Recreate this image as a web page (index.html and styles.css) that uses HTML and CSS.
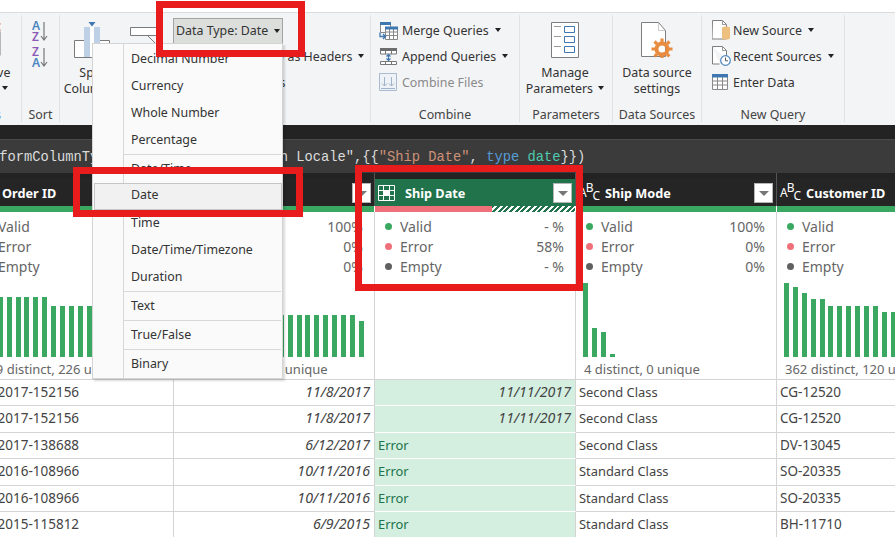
FILE: index.html
```html
<!DOCTYPE html>
<html>
<head>
    <title>Power Query Editor</title>
    <link rel="stylesheet" href="styles.css">
</head>
<body>
<div class="app">
    <div class="top-strip"></div>

    <div class="ribbon">
        <div class="group group-reduce">
            <div class="group-body big-btn">
                <svg class="big-icon" width="30" height="36" viewBox="0 0 30 36">
                    <path d="M1 9.500h27v24H1z M1 17.500h27 M1 25.500h27 M15 9.500v24" fill="#fff" stroke="#7a7a7a"/>
                    <path d="M19 1l9 8M28 1l-9 8" stroke="#d9673c" stroke-width="2.500" fill="none"/>
                </svg>
                <div class="big-label">Remove<br>Rows <span class="caret"></span></div>
            </div>
            <div class="group-label">Reduce Rows</div>
        </div>

        <div class="group group-sort">
            <div class="group-body sort-icons">
                <div class="sort-icon">
                    <div class="sort-letters"><span class="az-blue">A</span><span class="az-purple">Z</span></div>
                    <svg width="8" height="22" viewBox="0 0 8 22"><path d="M4 2v18M1 16l3 4 3-4" fill="none" stroke="#777" stroke-width="1.200"/></svg>
                </div>
                <div class="sort-icon">
                    <div class="sort-letters"><span class="az-purple">Z</span><span class="az-blue">A</span></div>
                    <svg width="8" height="22" viewBox="0 0 8 22"><path d="M4 2v18M1 16l3 4 3-4" fill="none" stroke="#777" stroke-width="1.200"/></svg>
                </div>
            </div>
            <div class="group-label">Sort</div>
        </div>

        <div class="group group-transform">
            <div class="group-body transform-body">
                <div class="big-btn split-btn">
                    <svg class="big-icon" width="36" height="36" viewBox="0 0 36 36">
                        <path d="M0.500 18.500h35v17h-35z" fill="#fff" stroke="#7a7a7a"/>
                        <path d="M10 5h6v30h-6zM20 5h6v30h-6z" fill="#bdd0e6"/>
                        <path d="M16 5h4v30h-4z" fill="#fff"/>
                        <path d="M14.500 0h7L18 4.500z" fill="#3f78b0"/>
                    </svg>
                    <div class="big-label">Split<br>Column <span class="caret"></span></div>
                </div>
                <div class="group-by">
                    <svg width="30" height="30" viewBox="0 0 30 30">
                        <path d="M0.500 0.500h29v8h-29z" fill="#fff" stroke="#7a7a7a"/>
                        <path d="M18 9l8 8" stroke="#7a7a7a"/>
                    </svg>
                </div>
                <div class="list-col list-transform">
                    <div class="list-row"><div class="data-type">Data Type: Date <span class="caret"></span></div></div>
                    <div class="list-row first-row">Use First Row as Headers <span class="caret"></span></div>
                    <div class="list-row replace-row">Replace Values</div>
                </div>
            </div>
            <div class="group-label">Transform</div>
        </div>

        <div class="group group-combine">
            <div class="group-body list-col">
                <div class="list-row">
                    <svg class="row-icon" width="19" height="19" viewBox="0 0 19 19">
                        <path d="M1.500 1.500h10v10h-10z" fill="#fff" stroke="#888"/>
                        <path d="M1 1h11v3H1z" fill="#3f78b0"/>
                        <path d="M6.500 6.500h12v12h-12z M6.500 11h12 M6.500 14.500h12 M10.500 6.500v12 M14.500 6.500v12" fill="#fff" stroke="#888"/>
                        <path d="M6 5.500h13v3H6z" fill="#3f78b0"/>
                        <path d="M1 11.500v4h5M4 13l2.500 2.500L4 18" fill="none" stroke="#3f78b0" stroke-width="1.300"/>
                    </svg>
                    <span>Merge Queries</span> <span class="caret"></span>
                </div>
                <div class="list-row">
                    <svg class="row-icon" width="19" height="19" viewBox="0 0 19 19">
                        <path d="M1 1h17v3H1z" fill="#6d6d6d"/>
                        <path d="M1.500 4v3h16V4M6.500 4v3M12.500 4v3M1.500 14.500h16v3h-16zM6.500 14.500v3M12.500 14.500v3" fill="#fff" stroke="#777"/>
                        <path d="M9.500 7.500v6M7.500 9.500l2-2 2 2M7.500 11.500l2 2 2-2" fill="none" stroke="#3f78b0" stroke-width="1.200"/>
                    </svg>
                    <span>Append Queries</span> <span class="caret"></span>
                </div>
                <div class="list-row row-disabled">
                    <svg class="row-icon" width="19" height="19" viewBox="0 0 19 19">
                        <path d="M0.500 0.500h17v17h-17z" fill="#eef1f5" stroke="#a9bbd0"/>
                        <path d="M5.500 4v9M3 10.500l2.500 2.500 2.500-2.500M12.500 4v9M10 10.500l2.500 2.500 2.500-2.500M2 15.500h14" fill="none" stroke="#9fb3ca"/>
                    </svg>
                    <span>Combine Files</span>
                </div>
            </div>
            <div class="group-label">Combine</div>
        </div>

        <div class="group group-params">
            <div class="group-body big-btn">
                <svg class="big-icon" width="28" height="36" viewBox="0 0 28 36">
                    <path d="M0.500 0.500h27v35h-27z" fill="#fff" stroke="#7e7e7e"/>
                    <path d="M3 4.500h7M3 14.500h7M3 24.500h7" stroke="#9a9a9a"/>
                    <path d="M13.500 4.500h10v6h-10zM13.500 14.500h10v6h-10zM13.500 24.500h10v6h-10z" fill="#fff" stroke="#3f78b0"/>
                </svg>
                <div class="big-label">Manage<br>Parameters <span class="caret"></span></div>
            </div>
            <div class="group-label">Parameters</div>
        </div>

        <div class="group group-sources">
            <div class="group-body big-btn">
                <svg class="big-icon" width="32" height="36" viewBox="0 0 32 36">
                    <path d="M0.500 0.500h17l7 8v26h-24z" fill="#fff" stroke="#7e7e7e"/>
                    <path d="M17.500 0.500v8h7" fill="none" stroke="#9a9a9a" stroke-dasharray="1 1"/>
                    <circle cx="21" cy="27" r="5.500" fill="none" stroke="#e88c3f" stroke-width="4"/>
                    <path d="M21 16.500v21M10.500 27h21M13.500 19.500l15 15M28.500 19.500l-15 15" stroke="#e88c3f" stroke-width="3.200" stroke-dasharray="3.500 14 3.500"/>
                </svg>
                <div class="big-label">Data source<br>settings</div>
            </div>
            <div class="group-label">Data Sources</div>
        </div>

        <div class="group group-query">
            <div class="group-body list-col">
                <div class="list-row">
                    <svg class="row-icon" width="19" height="20" viewBox="0 0 19 20">
                        <path d="M0.500 0.500h10l4 4v14.500h-14.500z" fill="#fff" stroke="#7e7e7e"/>
                        <path d="M10.500 0.500v4h4" fill="none" stroke="#999"/>
                        <path d="M10 8c0-2 8-2 8 0v10c0 2-8 2-8 0z" fill="#edc07f"/>
                    </svg>
                    <span>New Source</span> <span class="caret"></span>
                </div>
                <div class="list-row">
                    <svg class="row-icon" width="19" height="20" viewBox="0 0 19 20">
                        <path d="M0.500 0.500h10l4 4v9M0.500 0.500v17.500h7" fill="#fff" stroke="#7e7e7e"/>
                        <path d="M10.500 0.500v4h4" fill="none" stroke="#999"/>
                        <circle cx="13.500" cy="14.500" r="4.800" fill="#fff" stroke="#4a86c0" stroke-width="1.200"/>
                        <path d="M13.500 11.500v3.300h2.500" fill="none" stroke="#555"/>
                    </svg>
                    <span>Recent Sources</span> <span class="caret"></span>
                </div>
                <div class="list-row">
                    <svg class="row-icon" width="19" height="17" viewBox="0 0 19 17">
                        <path d="M0.500 0.500h15v15h-15zM0.500 7h15M0.500 11h15M5.500 3v12.500M10.500 3v12.500" fill="#fff" stroke="#888"/>
                        <path d="M0 0h16v3.500H0z" fill="#3f78b0"/>
                    </svg>
                    <span>Enter Data</span>
                </div>
            </div>
            <div class="group-label">New Query</div>
        </div>
    </div>

    <div class="dark-gap"></div>
    <div class="formula">
        <div class="formula-text">= Table.TransformColumnTypes(#"Changed Type with Locale",{{<span class="f-str">"Ship Date"</span>, <span class="f-kw">type</span> <span class="f-type">date</span>}})</div>
    </div>

    <div class="grid">
        <div class="head">
            <span class="abc">A<sup>B</sup><sub>C</sub></span>
            <span class="head-name">Order ID</span>
            <span class="filter"></span>
        </div>
        <div class="head">
            <span class="head-name">Order Date</span>
            <span class="filter"></span>
        </div>
        <div class="head head-selected">
            <svg class="cal" width="18" height="16" viewBox="0 0 18 16">
                <path d="M0.500 0.500h16v15h-16zM0.500 5.500h16M0.500 10.500h16M5.500 0.500v15M11.500 0.500v15" fill="none" stroke="#fff"/>
                <path d="M6 6h5v4H6z" fill="#fff"/>
            </svg>
            <span class="head-name">Ship Date</span>
            <span class="filter"></span>
        </div>
        <div class="head">
            <span class="abc">A<sup>B</sup><sub>C</sub></span>
            <span class="head-name">Ship Mode</span>
            <span class="filter"></span>
        </div>
        <div class="head">
            <span class="abc">A<sup>B</sup><sub>C</sub></span>
            <span class="head-name">Customer ID</span>
            <span class="filter"></span>
        </div>

        <div class="quality"></div>
        <div class="quality"></div>
        <div class="quality quality-error"><div class="q-red"></div><div class="q-hatch"></div></div>
        <div class="quality"></div>
        <div class="quality"></div>

        <div class="profile">
            <div class="stats">
                <div class="stat"><i class="dot dot-valid"></i>Valid<b>100%</b></div>
                <div class="stat"><i class="dot dot-error"></i>Error<b>0%</b></div>
                <div class="stat"><i class="dot dot-empty"></i>Empty<b>0%</b></div>
            </div>
            <div class="bars">
                <i style="height:60px"></i><i style="height:60px"></i><i style="height:60px"></i><i style="height:60px"></i><i style="height:60px"></i><i style="height:60px"></i><i style="height:60px"></i><i style="height:60px"></i>
                <i style="height:51px"></i><i style="height:51px"></i><i style="height:51px"></i><i style="height:51px"></i><i style="height:51px"></i><i style="height:51px"></i><i style="height:51px"></i><i style="height:51px"></i>
            </div>
            <div class="distinct">229 distinct, 226 unique</div>
        </div>
        <div class="profile">
            <div class="stats">
                <div class="stat"><i class="dot dot-valid"></i>Valid<b>100%</b></div>
                <div class="stat"><i class="dot dot-error"></i>Error<b>0%</b></div>
                <div class="stat"><i class="dot dot-empty"></i>Empty<b>0%</b></div>
            </div>
            <div class="bars">
                <i style="height:60px"></i><i style="height:60px"></i><i style="height:51px"></i><i style="height:51px"></i><i style="height:51px"></i><i style="height:51px"></i><i style="height:51px"></i><i style="height:51px"></i><i style="height:51px"></i><i style="height:51px"></i><i style="height:42px"></i><i style="height:42px"></i><i style="height:42px"></i><i style="height:42px"></i><i style="height:42px"></i><i style="height:42px"></i><i style="height:42px"></i><i style="height:42px"></i><i style="height:42px"></i><i style="height:42px"></i><i style="height:36px"></i>
            </div>
            <div class="distinct">228 distinct, 226 unique</div>
        </div>
        <div class="profile">
            <div class="stats">
                <div class="stat"><i class="dot dot-valid"></i>Valid<b>- %</b></div>
                <div class="stat"><i class="dot dot-error"></i>Error<b>58%</b></div>
                <div class="stat"><i class="dot dot-empty"></i>Empty<b>- %</b></div>
            </div>
        </div>
        <div class="profile">
            <div class="stats">
                <div class="stat"><i class="dot dot-valid"></i>Valid<b>100%</b></div>
                <div class="stat"><i class="dot dot-error"></i>Error<b>0%</b></div>
                <div class="stat"><i class="dot dot-empty"></i>Empty<b>0%</b></div>
            </div>
            <div class="bars">
                <i style="height:74px"></i><i style="height:29px"></i><i style="height:25px"></i><i style="height:3px"></i>
            </div>
            <div class="distinct">4 distinct, 0 unique</div>
        </div>
        <div class="profile">
            <div class="stats">
                <div class="stat"><i class="dot dot-valid"></i>Valid<b>100%</b></div>
                <div class="stat"><i class="dot dot-error"></i>Error<b>0%</b></div>
                <div class="stat"><i class="dot dot-empty"></i>Empty<b>0%</b></div>
            </div>
            <div class="bars">
                <i style="height:74px"></i><i style="height:70px"></i><i style="height:64px"></i><i style="height:58px"></i><i style="height:58px"></i><i style="height:51px"></i><i style="height:51px"></i><i style="height:51px"></i><i style="height:51px"></i><i style="height:51px"></i><i style="height:51px"></i><i style="height:45px"></i><i style="height:45px"></i>
            </div>
            <div class="distinct">362 distinct, 120 unique</div>
        </div>

        <div class="cell cell-id">CA-2017-152156</div><div class="cell cell-date">11/8/2017</div><div class="cell cell-sel cell-date">11/11/2017</div><div class="cell">Second Class</div><div class="cell cell-id">CG-12520</div>
        <div class="cell cell-id">CA-2017-152156</div><div class="cell cell-date">11/8/2017</div><div class="cell cell-sel cell-date">11/11/2017</div><div class="cell">Second Class</div><div class="cell cell-id">CG-12520</div>
        <div class="cell cell-id">CA-2017-138688</div><div class="cell cell-date">6/12/2017</div><div class="cell cell-sel cell-err">Error</div><div class="cell">Second Class</div><div class="cell cell-id">DV-13045</div>
        <div class="cell cell-id">US-2016-108966</div><div class="cell cell-date">10/11/2016</div><div class="cell cell-sel cell-err">Error</div><div class="cell">Standard Class</div><div class="cell cell-id">SO-20335</div>
        <div class="cell cell-id">US-2016-108966</div><div class="cell cell-date">10/11/2016</div><div class="cell cell-sel cell-err">Error</div><div class="cell">Standard Class</div><div class="cell cell-id">SO-20335</div>
        <div class="cell cell-id">CA-2015-115812</div><div class="cell cell-date">6/9/2015</div><div class="cell cell-sel cell-err">Error</div><div class="cell">Standard Class</div><div class="cell cell-id">BH-11710</div>
    </div>

    <!-- data type dropdown -->
    <div class="menu">
        <div class="menu-item">Decimal Number</div>
        <div class="menu-item">Currency</div>
        <div class="menu-item">Whole Number</div>
        <div class="menu-item">Percentage</div>
        <div class="menu-sep"></div>
        <div class="menu-item">Date/Time</div>
        <div class="menu-item menu-current">Date</div>
        <div class="menu-item">Time</div>
        <div class="menu-item">Date/Time/Timezone</div>
        <div class="menu-item">Duration</div>
        <div class="menu-sep"></div>
        <div class="menu-item">Text</div>
        <div class="menu-sep"></div>
        <div class="menu-item">True/False</div>
        <div class="menu-sep"></div>
        <div class="menu-item">Binary</div>
    </div>

    <!-- annotation boxes -->
    <div class="callout callout-type"></div>
    <div class="callout callout-date"></div>
    <div class="callout callout-col"></div>
</div>
</body>
</html>
```
FILE: styles.css
```css
* {
  box-sizing: border-box;
}

body {
  margin: 0;
  background: #fff;
}

.app {
  position: relative;
  width: 895px;
  height: 537px;
  overflow: hidden;
  font-family: "Noto Sans", "Open Sans", sans-serif;
  font-size: 12.4px;
  color: #333;
}

.top-strip {
  height: 12px;
  background: #fff;
}

/* ribbon */
.ribbon {
  display: flex;
  height: 113px;
  padding-top: 2px;
  margin-left: -39px;
  background: #f3f4f6;
  border-top: 1px solid #dcdcdc;
}

.group {
  display: flex;
  flex-direction: column;
  flex: none;
  height: 107px;
  border-right: 1px solid #e1e2e4;
}

.group-reduce { width: 61px; }
.group-sort { width: 38px; }
.group-transform { width: 311px; }
.group-combine { width: 149px; }
.group-params { width: 93px; }
.group-sources { width: 89px; }
.group-query { width: 143px; }

.group-body {
  flex: 1;
  min-height: 0;
}

.group-label {
  height: 16px;
  line-height: 16px;
  margin-bottom: -1px;
  text-align: center;
  white-space: nowrap;
  color: #444;
}

.group-reduce .big-btn {
  padding-right: 8px;
}

.group-reduce .group-label {
  display: flex;
  justify-content: flex-end;
  padding-right: 20px;
}

.group-params .big-btn {
  padding-right: 2px;
}

.big-btn {
  display: flex;
  flex-direction: column;
  align-items: center;
  padding-top: 7px;
}

.big-icon {
  flex: none;
  height: 36px;
}

.big-label {
  margin-top: 7px;
  line-height: 16px;
  text-align: center;
  white-space: nowrap;
}

.caret {
  display: inline-block;
  width: 0;
  height: 0;
  margin-left: 2px;
  vertical-align: 3px;
  border-left: 3.5px solid transparent;
  border-right: 3.5px solid transparent;
  border-top: 4px solid #222;
}

.sort-icons {
  display: flex;
  flex-direction: column;
  gap: 4px;
  padding: 5px 0 0 10px;
}

.sort-icon {
  display: flex;
  align-items: flex-end;
  height: 22px;
}

.sort-letters {
  display: flex;
  flex-direction: column;
  font-size: 12px;
  line-height: 11px;
  font-weight: 600;
}

.az-blue { color: #4a86c0; }
.az-purple { color: #8a5ab5; }

.transform-body {
  display: flex;
  position: relative;
}

.split-btn {
  width: 60px;
  margin-left: 2px;
}

.group-by {
  width: 51px;
  padding: 12px 0 0 8px;
}

.list-col {
  display: flex;
  flex-direction: column;
  padding: 2px 0 0 8px;
}

.group-query.group .list-col {
  padding-left: 10px;
}

.group-query .list-row {
  gap: 2px;
}

.group-query .caret {
  margin-left: 4px;
}

.list-row {
  display: flex;
  align-items: center;
  gap: 4px;
  height: 26px;
  white-space: nowrap;
}

.row-icon {
  flex: none;
  width: 19px;
}

.row-disabled {
  color: #8a8a8a;
}

.list-col.list-transform {
  padding-left: 0;
}

.data-type {
  display: flex;
  align-items: center;
  gap: 4px;
  width: 110px;
  height: 26px;
  padding-left: 2px;
  margin-top: 1px;
  background: #dcdedc;
  border: 1px solid #a3a3a3;
}

.first-row {
  padding-left: 33px;
}

.replace-row {
  padding-left: 26px;
}

/* dark bars */
.dark-gap {
  height: 14px;
  background: #232323;
}

.formula {
  height: 34px;
  background: #3b3b3b;
  border-top: 1px solid #4a4a4a;
}

.formula-text {
  margin-left: -108px;
  line-height: 35px;
  font-family: "Liberation Mono", monospace;
  font-size: 13.75px;
  white-space: nowrap;
  color: #dcdcdc;
}

.f-str { color: #ce9178; }
.f-kw { color: #569cd6; }
.f-type { color: #4ec9b0; }

/* data grid */
.grid {
  display: grid;
  grid-template-columns: repeat(5, 201px);
  grid-template-rows: 33px 6px 168px repeat(6, 26.4px);
  margin-left: -27px;
  width: 1005px;
}

.head {
  display: flex;
  align-items: center;
  padding: 7px 3px 0 3px;
  background: #252525;
  border-right: 1px solid #555;
  box-shadow: inset 0 6px 0 #232323;
  color: #fff;
  font-size: 12.7px;
  font-weight: 700;
}

.head-selected {
  background: #20734a;
}

.abc {
  flex: none;
  width: 26px;
  font-size: 12px;
  font-weight: 400;
  line-height: 1;
  white-space: nowrap;
}

.abc sup,
.abc sub {
  margin-left: -1px;
  font-size: 12px;
  line-height: 0;
}

.head-name {
  flex: 1;
  white-space: nowrap;
}

.head:nth-child(2) .head-name {
  padding-left: 26px;
}

.cal {
  flex: none;
  width: 18px;
  margin: 0 9px 0 0;
}

.filter {
  flex: none;
  position: relative;
  width: 19px;
  height: 20px;
  background: #fff;
  border: 1px solid #b5b5b5;
}

.filter::after {
  content: "";
  position: absolute;
  left: 4px;
  top: 7px;
  border-left: 5px solid transparent;
  border-right: 5px solid transparent;
  border-top: 5px solid #777;
}

.quality {
  background: #3aa860;
  border-right: 1px solid #fff;
}

.quality-error {
  display: flex;
}

.q-red {
  width: 117px;
  background: #f0707a;
}

.q-hatch {
  flex: 1;
  background: repeating-linear-gradient(135deg, #20734a 0, #20734a 2px, #fff 2px, #fff 4px);
}

.profile {
  position: relative;
  padding-top: 4px;
  border-right: 1px solid #d4d4d4;
  border-bottom: 1px solid #d4d4d4;
}

.stat {
  display: flex;
  align-items: center;
  height: 20px;
  padding: 0 11px 0 10px;
  font-size: 14px;
  color: #666;
}

.stat b {
  margin-left: auto;
  font-weight: 400;
}

.dot {
  flex: none;
  width: 7px;
  height: 7px;
  margin-right: 8px;
  border-radius: 50%;
}

.dot-valid { background: #3aa860; }
.dot-error { background: #f0707a; }
.dot-empty { background: #606060; }

.bars {
  position: absolute;
  left: 7px;
  bottom: 22px;
  display: flex;
  align-items: flex-end;
  gap: 3.900px;
}

.bars i {
  width: 5px;
  background: #3aa860;
}

.distinct {
  position: absolute;
  left: 8px;
  bottom: 0;
  height: 20px;
  line-height: 20px;
  font-size: 13px;
  white-space: nowrap;
  color: #666;
}

.cell {
  padding: 0 4px 0 3px;
  line-height: 24.500px;
  font-size: 12.9px;
  white-space: nowrap;
  color: #444;
  background: #fff;
  border-right: 1px solid #d4d4d4;
  border-bottom: 1px solid #d4d4d4;
}

.cell-id {
  font-size: 13.5px;
}

.cell-date {
  text-align: right;
  font-size: 14.2px;
  font-style: italic;
}

.cell-sel {
  background: #d4efe0;
  border-bottom-color: #fff;
}

.cell-err {
  color: #20734a;
}

/* dropdown */
.menu {
  position: absolute;
  left: 92px;
  top: 43px;
  width: 191px;
  height: 336px;
  padding-top: 2px;
  background: linear-gradient(to right, #fafafa 30px, #d8d8d8 30px, #d8d8d8 31px, #fafafa 31px);
  border: 1px solid #d4d4d4;
  box-shadow: 2px 2px 2px rgba(0, 0, 0, 0.15);
}

.menu-item {
  height: 27px;
  line-height: 25px;
  padding-left: 38px;
  color: #333;
}

.menu-sep {
  height: 1px;
  margin: 0 1px 1px 31px;
  background: #d8d8d8;
}

.menu-item.menu-current {
  line-height: 22px;
  padding-left: 36px;
  margin-left: 1px;
  background: #f1f1f1;
  border: 1px solid #c6c6c6;
}

/* red annotation boxes */
.callout {
  position: absolute;
  border: 7.500px solid #e81c1c;
}

.callout-type {
  left: 156px;
  top: 1px;
  width: 149px;
  height: 56px;
}

.callout-date {
  left: 73px;
  top: 167px;
  width: 230px;
  height: 50px;
}

.callout-col {
  left: 355px;
  top: 165px;
  width: 228px;
  height: 126px;
}
```
